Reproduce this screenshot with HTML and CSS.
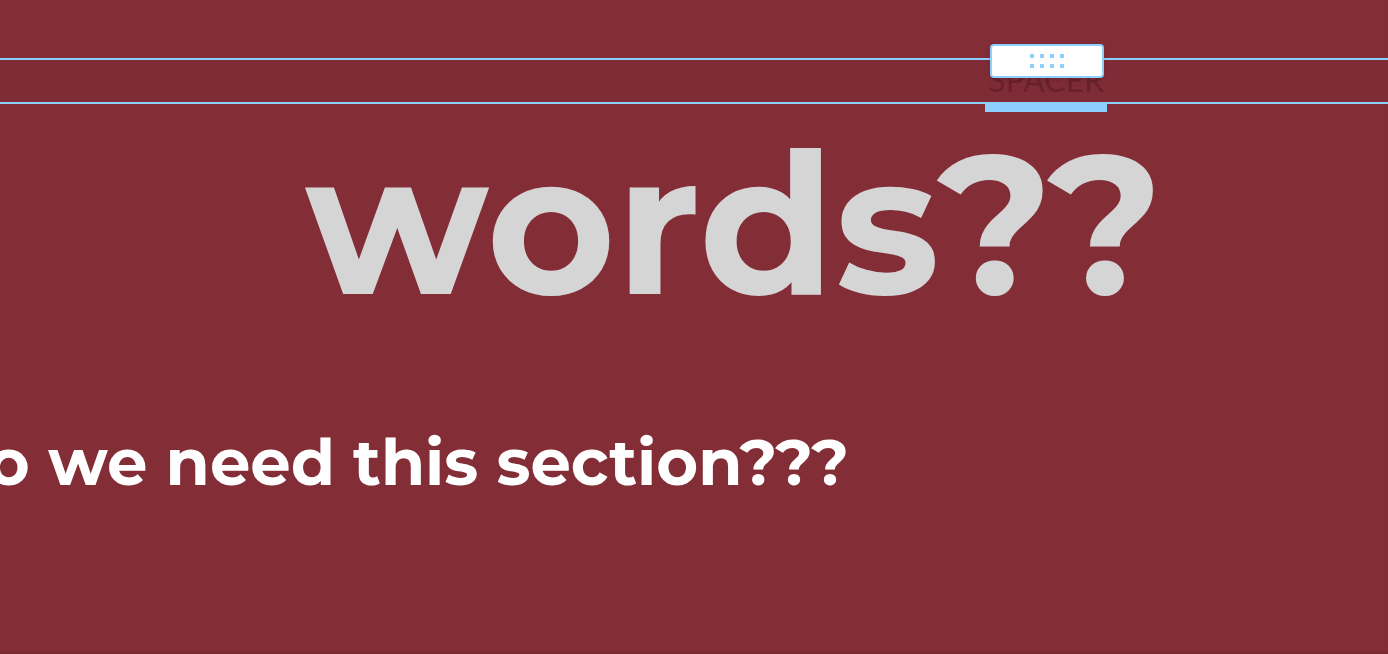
FILE: index.html
```
<!DOCTYPE html>
<html lang="en">
<head>
<meta charset="utf-8">
<title>Page editor</title>
<link rel="stylesheet" href="styles.css">
</head>
<body>
<main class="canvas">
  <section class="spacer">
    <span class="spacer-label">SPACER</span>
    <button class="drag-handle" type="button" aria-label="Move spacer">
      <svg class="dots" viewBox="0 0 34 14" aria-hidden="true"><path d="M0 0h4v4H0zM10 0h4v4h-4zM20 0h4v4h-4zM30 0h4v4h-4zM0 10h4v4H0zM10 10h4v4h-4zM20 10h4v4h-4zM30 10h4v4h-4z"/></svg>
    </button>
    <span class="resize-bar"></span>
  </section>
  <h1 class="headline">words??</h1>
  <h2 class="question">Do we need this section???</h2>
</main>
</body>
</html>
```
FILE: styles.css
```
* { box-sizing: border-box; }
body { margin: 0; background: #832d37; font-family: Montserrat, "Open Sans", sans-serif; }
.canvas { min-height: 100vh; padding-top: 58px; overflow: hidden; box-shadow: inset 0 -3px 3px -2px rgba(0,0,0,.15); }
.spacer { position: relative; height: 46px; border-top: 2px solid #8dcfff; border-bottom: 2px solid #8dcfff; background: #802c37; }
.spacer-label { position: absolute; right: 284px; top: 0; font: 32px/40px Lato, sans-serif; color: #69212c; }
.drag-handle { position: absolute; right: 284px; top: -16px; width: 114px; height: 34px; padding: 0; border: 2px solid #8dcfff; border-radius: 4px; background: #fff; display: flex; align-items: center; justify-content: center; box-shadow: 0 2px 6px rgba(0,0,0,.12); }
.dots { width: 34px; height: 14px; fill: #8dcfff; }
.resize-bar { position: absolute; right: 281px; top: 42px; width: 122px; height: 10px; background: #8dcfff; }
.headline { margin: 0; padding-left: 80px; text-align: center; font-size: 197px; line-height: 238px; font-weight: 700; color: #d5d5d5; }
.question { margin: 78px 0 0 -65px; font-size: 64px; line-height: 84px; font-weight: 700; color: #fff; white-space: nowrap; }
```
